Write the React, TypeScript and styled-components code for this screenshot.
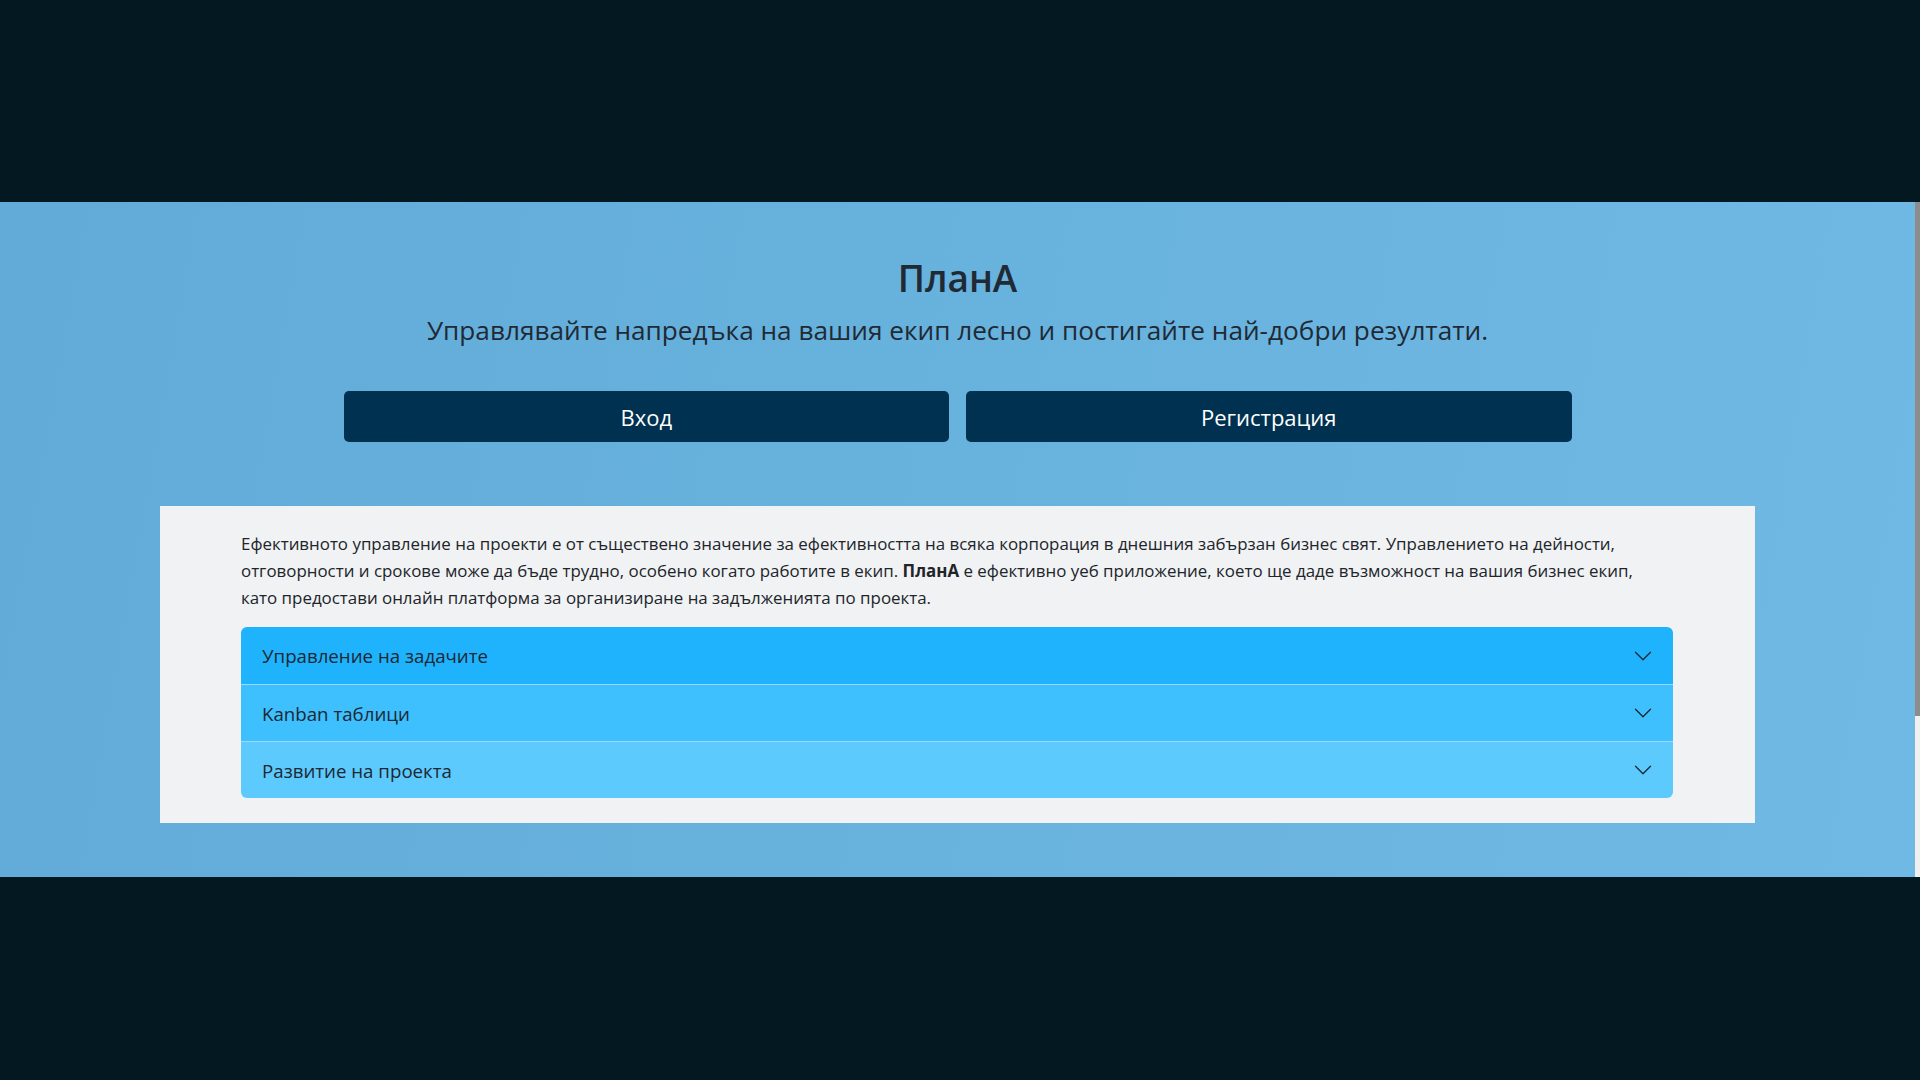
import React from "react";
import styled, { createGlobalStyle } from "styled-components";

const GlobalStyle = createGlobalStyle`
  html, body {
    margin: 0;
    padding: 0;
    height: 100%;
    overflow: hidden;
    background: #041822;
  }
  * { box-sizing: border-box; }
  body {
    font-family: "Open Sans", "Noto Sans", sans-serif;
    color: #212529;
  }
`;

const Page = styled.div`
  height: 1080px;
  display: grid;
  grid-template-rows: 202px 675px 1fr;
  background: #041822;
`;

const Band = styled.div`
  background: #041822;
`;

const Frame = styled.div`
  display: grid;
  grid-template-columns: 1fr 5px;
  background: linear-gradient(100deg, #62abd8 0%, #68b2de 50%, #70b9e4 100%);
  overflow: hidden;
`;

const ScrollTrack = styled.div`
  background: #f0f0f0;
  display: flex;
  flex-direction: column;
`;

const ScrollThumb = styled.div`
  height: 514px;
  background: #8c8c8c;
`;

const Content = styled.main`
  padding: 52px 0 0;
  display: flex;
  flex-direction: column;
  align-items: center;
  overflow: hidden;
`;

const Title = styled.h1`
  margin: 0;
  font-size: 37px;
  line-height: 48px;
  font-weight: 600;
  color: #1f2a35;
`;

const Lead = styled.p`
  margin: 10px 0 0;
  font-size: 26.2px;
  line-height: 36px;
  font-weight: 400;
  color: #1f2a35;
  white-space: nowrap;
`;

const Actions = styled.div`
  margin-top: 43px;
  width: 1228px;
  display: grid;
  grid-template-columns: 1fr 1fr;
  gap: 17px;
`;

const Button = styled.button`
  height: 51px;
  border: none;
  border-radius: 5px;
  background: #003150;
  color: #ffffff;
  font-family: "Open Sans", "Noto Sans", sans-serif;
  font-size: 22px;
  cursor: pointer;
`;

const Card = styled.section`
  margin-top: 64px;
  width: 1595px;
  background: #f0f2f4;
  padding: 24px 82px 25px 81px;
`;

const Text = styled.p`
  margin: 0;
  font-size: 16.9px;
  line-height: 27px;
  color: #212529;
  b {
    font-weight: 700;
  }
`;

const Accordion = styled.div`
  margin-top: 16px;
  border-radius: 6px;
  overflow: hidden;
  display: flex;
  flex-direction: column;
`;

const Item = styled.button<{ $bg: string; $first?: boolean }>`
  height: ${(p) => (p.$first ? "57px" : "57px")};
  border: none;
  border-top: ${(p) => (p.$first ? "none" : "1px solid #9ad9ff")};
  background: ${(p) => p.$bg};
  padding: 0 20px 0 21px;
  display: flex;
  align-items: center;
  justify-content: space-between;
  font-family: "Open Sans", "Noto Sans", sans-serif;
  font-size: 18.7px;
  color: #1c2833;
  text-align: left;
  cursor: pointer;
`;

const Chevron = () => (
  <svg width="20" height="20" viewBox="0 0 16 16" aria-hidden="true">
    <path
      d="M2 5L8 11L14 5"
      fill="none"
      stroke="#1c2b3a"
      strokeWidth="1.1"
      strokeLinecap="round"
      strokeLinejoin="round"
    />
  </svg>
);

const items = [
  { label: "Управление на задачите", bg: "#1fb3fe" },
  { label: "Kanban таблици", bg: "#3ebffe" },
  { label: "Развитие на проекта", bg: "#5dcafe" },
];

export default function App() {
  return (
    <>
      <GlobalStyle />
      <Page>
        <Band />
        <Frame>
          <Content>
            <Title>ПланА</Title>
            <Lead>Управлявайте напредъка на вашия екип лесно и постигайте най-добри резултати.</Lead>
            <Actions>
              <Button>Вход</Button>
              <Button>Регистрация</Button>
            </Actions>
            <Card>
              <Text>
                Ефективното управление на проекти е от съществено значение за ефективността на всяка
                корпорация в днешния забързан бизнес свят. Управлението на дейности, отговорности и
                срокове може да бъде трудно, особено когато работите в екип. <b>ПланА</b> е ефективно уеб
                приложение, което ще даде възможност на вашия бизнес екип, като предостави онлайн
                платформа за организиране на задълженията по проекта.
              </Text>
              <Accordion>
                {items.map((it, i) => (
                  <Item key={it.label} $bg={it.bg} $first={i === 0}>
                    <span>{it.label}</span>
                    <Chevron />
                  </Item>
                ))}
              </Accordion>
            </Card>
          </Content>
          <ScrollTrack>
            <ScrollThumb />
          </ScrollTrack>
        </Frame>
        <Band />
      </Page>
    </>
  );
}
